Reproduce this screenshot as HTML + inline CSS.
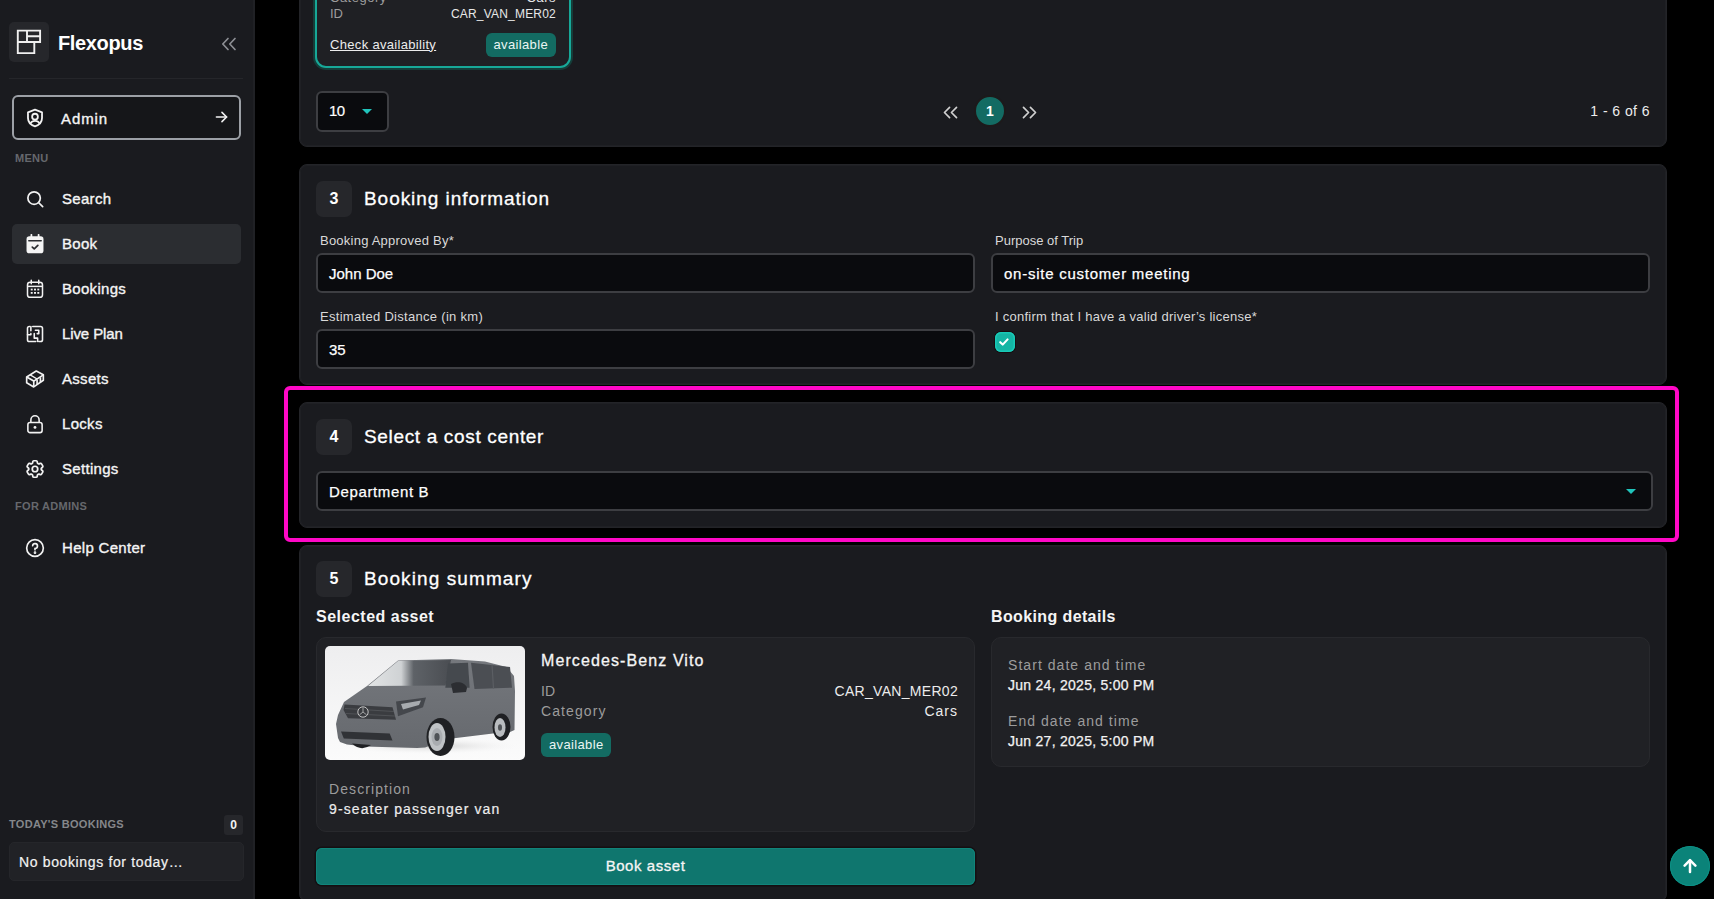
<!DOCTYPE html>
<html><head><meta charset="utf-8">
<style>
*{box-sizing:border-box;margin:0;padding:0}
html,body{width:1714px;height:899px;overflow:hidden;background:#000;font-family:"Liberation Sans",sans-serif;color:#f2f2f2}
.abs{position:absolute}
#sb{position:absolute;left:0;top:0;width:255px;height:899px;background:#1a1b1f;border-right:2px solid #202125}
.logo{left:9px;top:22px;width:40px;height:40px;border-radius:5px;background:#26272b}
.brand{left:58px;top:32px;font-size:20px;font-weight:bold;color:#fff;letter-spacing:-0.35px}
.divider{left:9px;top:78px;width:234px;height:1px;background:#25262a}
.admin{left:12px;top:95px;width:229px;height:45px;border:2px solid #9ca0a6;border-radius:6px;background:#151619}
.cap{font-size:11px;font-weight:bold;color:#66686d;letter-spacing:0.3px}
.nav{left:12px;width:229px;height:40px;border-radius:5px}
.nav.active{background:#2b2d31}
.nav .ic{position:absolute;left:14px;top:11px;width:18px;height:18px}
.nav .tx{position:absolute;left:50px;top:11px;font-size:15px;font-weight:normal;-webkit-text-stroke:0.35px #f5f5f5;color:#f5f5f5;letter-spacing:0.3px}
.card{position:absolute;left:299px;width:1368px;background:#1a1b1f;border:1px solid #232428;box-shadow:inset 0 0 0 1px #1f2024;border-radius:8px}
.step{position:absolute;width:36px;height:36px;border-radius:7px;background:#26272b;font-size:16px;font-weight:bold;text-align:center;line-height:36px;color:#fff}
.title{position:absolute;font-size:19px;color:#fff;-webkit-text-stroke:0.3px #fff}
.lbl{position:absolute;font-size:13px;color:#d9d9d9}
.inp{position:absolute;height:40px;background:#0a0b0e;border:2px solid #3d3e42;border-radius:6px;font-size:15px;padding-left:11px;line-height:38px;color:#fff;-webkit-text-stroke:0.25px #fff}
.teal{background:#137067}
.badge{height:24px;padding:0 8px;border-radius:6px;background:#136b62;font-size:13px;line-height:24px;color:#eaf5f3}
.tri{width:0;height:0;border-left:5px solid transparent;border-right:5px solid transparent;border-top:5px solid #20c4bb}
</style></head>
<body>
<div id="sb">
  <div class="abs logo"><svg class="abs" style="left:0;top:0" width="40" height="40" viewBox="0 0 40 40" fill="none" stroke="#f0f0f0" stroke-width="1.9"><path d="M8.8 8.6H31.1V20H25.3V31.1H8.8Z"/><path d="M8.8 20H25.3M18 8.6V20M18 14.2H31.1"/></svg></div>
  <div class="abs brand">Flexopus</div>
  <svg class="abs" style="left:221px;top:37px" width="16" height="14" viewBox="0 0 16 14" fill="none" stroke="#8d8f94" stroke-width="1.7" stroke-linecap="round" stroke-linejoin="round"><path d="M7 1.5L1.8 7L7 12.5"/><path d="M14 1.5L8.8 7L14 12.5"/></svg>
  <div class="abs divider"></div>
  <div class="abs admin">
    <svg class="abs" style="left:12px;top:11px" width="18" height="20" viewBox="0 0 20 21" fill="none" stroke="#f2f2f2" stroke-width="2" stroke-linejoin="round"><path d="M10 1.2L17.8 4.2V10.5C17.8 15 14.5 18.3 10 19.8C5.5 18.3 2.2 15 2.2 10.5V4.2Z"/><circle cx="10" cy="9" r="3.2"/><path d="M4.8 16.6C6 14.4 8 13.6 10 13.6S14 14.4 15.2 16.6"/></svg>
    <div class="abs" style="left:47px;top:13px;font-size:15px;-webkit-text-stroke:0.35px #f5f5f5;letter-spacing:0.9px;color:#f5f5f5">Admin</div>
    <svg class="abs" style="left:201px;top:14px" width="13" height="12" viewBox="0 0 14 13" fill="none" stroke="#f2f2f2" stroke-width="1.7" stroke-linecap="round" stroke-linejoin="round"><path d="M1.5 6.5H12.5"/><path d="M7.5 1.5L12.5 6.5L7.5 11.5"/></svg>
  </div>
  <div class="abs cap" style="left:15px;top:152px">MENU</div>
  <div class="abs nav" style="top:179px"><svg class="ic" viewBox="0 0 24 24" fill="none" stroke="#f2f2f2" stroke-width="2.3" stroke-linecap="round"><circle cx="10.8" cy="10.8" r="8.3"/><path d="M17 17L22.2 22.2"/></svg><div class="tx">Search</div></div>
  <div class="abs nav active" style="top:224px"><svg class="ic" style="left:14px;top:10px;width:18px;height:20px" viewBox="0 0 24 26" fill="none"><rect x="0.7" y="2.8" width="22.6" height="22.6" rx="3.8" fill="#f5f5f5"/><path d="M3.8 8.6H20.2" stroke="#2b2d31" stroke-width="2.2" stroke-linecap="round"/><path d="M7.2 0.8V4.6M16.8 0.8V4.6" stroke="#f5f5f5" stroke-width="2.4" stroke-linecap="round"/><path d="M8.4 17.2L11 19.6L15.8 14.8" stroke="#2b2d31" stroke-width="2.3" stroke-linecap="round" stroke-linejoin="round"/></svg><div class="tx" style="letter-spacing:0.3px">Book</div></div>
  <div class="abs nav" style="top:269px"><svg class="ic" style="top:10px;height:20px" viewBox="0 0 24 26" fill="none" stroke="#f2f2f2" stroke-width="2"><rect x="2" y="4" width="20" height="20" rx="3.5"/><path d="M2 9.5H22"/><path d="M7 1.2V6M17 1.2V6" stroke-linecap="round"/><g fill="#f2f2f2" stroke="none"><rect x="6.3" y="12.5" width="2.6" height="2.4"/><rect x="10.7" y="12.5" width="2.6" height="2.4"/><rect x="15.1" y="12.5" width="2.6" height="2.4"/><rect x="6.3" y="17" width="2.6" height="2.4"/><rect x="10.7" y="17" width="2.6" height="2.4"/><rect x="15.1" y="17" width="2.6" height="2.4"/></g></svg><div class="tx">Bookings</div></div>
  <div class="abs nav" style="top:314px"><svg class="ic" viewBox="0 0 24 24" fill="none" stroke="#f2f2f2" stroke-width="2.1" stroke-linecap="round" stroke-linejoin="round"><path d="M9 2H19.5Q22 2 22 4.5V19.5Q22 22 19.5 22H17"/><path d="M13 22H4.5Q2 22 2 19.5V4.5Q2 2 4.5 2H5"/><path d="M2 13H6.5V11.5"/><path d="M6.5 7.5V2"/><path d="M12.5 7H17V11.5H15"/><path d="M11 11.5V17.5H15.5V22"/></svg><div class="tx" style="letter-spacing:-0.1px">Live Plan</div></div>
  <div class="abs nav" style="top:359px"><svg class="ic" style="left:13px;top:10px;width:20px;height:20px" viewBox="0 0 24 24" fill="none" stroke="#f2f2f2" stroke-width="2" stroke-linejoin="round"><path d="M2 9.5L13.5 2.5L22 7V13.5L10.5 21.5L2 16.5Z"/><path d="M2 9.5L10.5 14.5L22 7"/><path d="M10.5 14.5V21.5"/><path d="M14.5 12.5V18.5M18.5 10V16" /><path d="M6.2 7L14.5 12" stroke-width="1.6"/></svg><div class="tx">Assets</div></div>
  <div class="abs nav" style="top:404px"><svg class="ic" style="top:10px;height:20px" viewBox="0 0 24 26" fill="none" stroke="#f2f2f2" stroke-width="2.1"><rect x="2.5" y="11" width="19" height="13.5" rx="3"/><path d="M6.5 11V7.5A5.5 5.5 0 0 1 17.5 7.5V11"/><circle cx="12" cy="17.5" r="1.9" fill="#f2f2f2" stroke="none"/></svg><div class="tx">Locks</div></div>
  <div class="abs nav" style="top:449px"><svg class="ic" style="left:12px;top:9px;width:22px;height:22px" viewBox="0 0 24 24" fill="none" stroke="#f2f2f2" stroke-width="1.9" stroke-linejoin="round"><path d="M9.594 3.94c.09-.542.56-.94 1.11-.94h2.593c.55 0 1.02.398 1.11.94l.213 1.281c.063.374.313.686.645.87.074.04.147.083.22.127.325.196.72.257 1.075.124l1.217-.456a1.125 1.125 0 0 1 1.37.49l1.296 2.247a1.125 1.125 0 0 1-.26 1.431l-1.003.827c-.293.241-.438.613-.43.992a7.723 7.723 0 0 1 0 .255c-.008.378.137.75.43.991l1.004.827c.424.35.534.955.26 1.43l-1.298 2.247a1.125 1.125 0 0 1-1.369.491l-1.217-.456c-.355-.133-.75-.072-1.076.124a6.47 6.47 0 0 1-.22.128c-.331.183-.581.495-.644.869l-.213 1.281c-.09.543-.56.94-1.11.94h-2.594c-.55 0-1.019-.398-1.11-.94l-.213-1.281c-.062-.374-.312-.686-.644-.87a6.52 6.52 0 0 1-.22-.127c-.325-.196-.72-.257-1.076-.124l-1.217.456a1.125 1.125 0 0 1-1.369-.49l-1.297-2.247a1.125 1.125 0 0 1 .26-1.431l1.004-.827c.292-.24.437-.613.43-.991a6.932 6.932 0 0 1 0-.255c.007-.38-.138-.751-.43-.992l-1.004-.827a1.125 1.125 0 0 1-.26-1.43l1.297-2.247a1.125 1.125 0 0 1 1.37-.491l1.216.456c.356.133.751.072 1.076-.124.072-.044.146-.086.22-.128.332-.183.582-.495.644-.869l.214-1.28Z"/><circle cx="12" cy="12" r="3"/></svg><div class="tx">Settings</div></div>
  <div class="abs cap" style="left:15px;top:500px">FOR ADMINS</div>
  <div class="abs nav" style="top:528px"><svg class="ic" style="left:13px;top:10px;width:20px;height:20px" viewBox="0 0 24 24" fill="none" stroke="#f2f2f2" stroke-width="2" stroke-linecap="round"><circle cx="12" cy="12" r="10"/><path d="M9.2 9.3A2.9 2.9 0 1 1 12 12.6V14"/><circle cx="12" cy="17.6" r="0.6" fill="#f2f2f2"/></svg><div class="tx">Help Center</div></div>
  <div class="abs cap" style="left:9px;top:818px;color:#85878b">TODAY'S BOOKINGS</div>
  <div class="abs" style="left:224px;top:815px;width:19px;height:20px;border-radius:3px;background:#26272b;font-size:12px;font-weight:bold;text-align:center;line-height:20px">0</div>
  <div class="abs" style="left:9px;top:842px;width:235px;height:39px;border-radius:5px;background:#212226;border:1px solid #25262a;font-size:14px;padding-left:9px;line-height:39px;letter-spacing:0.64px;-webkit-text-stroke:0.2px #f0f0f0">No bookings for today&hellip;</div>
</div>

<!-- card 1 -->
<div class="card" style="top:-40px;height:187px">
  <div class="abs" style="left:15px;top:-100px;width:256px;height:207px;border-radius:11px;border:2px solid #17a898;box-shadow:0 0 0 2px #153d39;background:#1f2024">
    <div class="abs" style="left:13px;top:127px;font-size:13px;color:#9c9c9c;letter-spacing:0.5px">Category</div>
    <div class="abs" style="right:13px;top:127px;font-size:13px;color:#e8e8e8;letter-spacing:0.5px">Cars</div>
    <div class="abs" style="left:13px;top:143px;font-size:13px;color:#9c9c9c">ID</div>
    <div class="abs" style="right:13px;top:144px;font-size:12px;color:#e8e8e8;letter-spacing:0.2px">CAR_VAN_MER02</div>
    <div class="abs" style="left:13px;top:174px;font-size:13px;color:#ececec;text-decoration:underline;text-decoration-thickness:1px;text-underline-offset:1px;letter-spacing:0.32px">Check availability</div>
    <div class="abs badge" style="right:13px;top:170px;padding:0 8px;letter-spacing:0.35px">available</div>
  </div>
  <div class="abs" style="left:16px;top:130px;width:73px;height:41px;background:#0a0b0e;border:2px solid #3d3e42;border-radius:6px">
    <div class="abs" style="left:11px;top:9px;font-size:15px;color:#fff;letter-spacing:-0.6px;-webkit-text-stroke:0.2px #fff">10</div>
    <div class="abs tri" style="left:44px;top:16px"></div>
  </div>
  <svg class="abs" style="left:642px;top:145px" width="17" height="13" viewBox="0 0 17 14" fill="none" stroke="#d0d0d0" stroke-width="1.8" stroke-linecap="round" stroke-linejoin="round"><path d="M7.5 1.5L2 7L7.5 12.5"/><path d="M15 1.5L9.5 7L15 12.5"/></svg>
  <div class="abs" style="left:674px;top:134px;width:32px;height:32px;border-radius:50%;border:2px solid #1d1a1b;background:#136b63"></div>
  <div class="abs" style="left:676px;top:136px;width:28px;height:28px;text-align:center;line-height:28px;font-size:14px;font-weight:bold;color:#fff">1</div>
  <svg class="abs" style="left:721px;top:145px" width="17" height="13" viewBox="0 0 17 14" fill="none" stroke="#d0d0d0" stroke-width="1.8" stroke-linecap="round" stroke-linejoin="round"><path d="M2 1.5L7.5 7L2 12.5"/><path d="M9.5 1.5L15 7L9.5 12.5"/></svg>
  <div class="abs" style="right:16px;top:142px;font-size:14px;color:#ededed;letter-spacing:0.44px">1 - 6 of 6</div>
</div>
<!-- card 2 -->
<div class="card" style="top:164px;height:221px">
  <div class="step" style="left:16px;top:16px">3</div>
  <div class="title" style="left:64px;top:23px;letter-spacing:0.95px">Booking information</div>
  <div class="lbl" style="left:20px;top:68px;letter-spacing:0.23px">Booking Approved By*</div>
  <div class="inp" style="left:16px;top:88px;width:659px">John Doe</div>
  <div class="lbl" style="left:20px;top:144px;letter-spacing:0.3px">Estimated Distance (in km)</div>
  <div class="inp" style="left:16px;top:164px;width:659px">35</div>
  <div class="lbl" style="left:695px;top:68px">Purpose of Trip</div>
  <div class="inp" style="left:691px;top:88px;width:659px;letter-spacing:0.75px">on-site customer meeting</div>
  <div class="lbl" style="left:695px;top:144px;letter-spacing:0.25px">I confirm that I have a valid driver’s license*</div>
  <div class="abs" style="left:695px;top:167px;width:20px;height:20px;border-radius:6px;background:#14b5a4;box-shadow:0 0 0 1px #150d10,inset 0 0 0 1.5px #19c9b6"><svg class="abs" style="left:0;top:0" width="20" height="20" viewBox="0 0 20 20" fill="none" stroke="#fff" stroke-width="2.1" stroke-linecap="round" stroke-linejoin="round"><path d="M5.2 10.2L7.7 12.6L12.6 7.4"/></svg></div>
</div>
<!-- card 3 -->
<div class="card" style="top:402px;height:126px">
  <div class="step" style="left:16px;top:16px">4</div>
  <div class="title" style="left:64px;top:23px;letter-spacing:0.66px">Select a cost center</div>
  <div class="inp" style="left:16px;top:68px;width:1337px;letter-spacing:0.64px">Department B<div class="abs tri" style="left:1308px;top:16px"></div></div>
</div>
<!-- magenta -->
<div class="abs" style="left:284px;top:386px;width:1395px;height:156px;border:4px solid #ff08c6;border-radius:6px"></div>
<!-- card 4 -->
<div class="card" style="top:545px;height:357px">
  <div class="step" style="left:16px;top:15px">5</div>
  <div class="title" style="left:64px;top:22px;letter-spacing:1.1px">Booking summary</div>
  <div class="abs" style="left:16px;top:62px;font-size:16px;font-weight:bold;color:#f5f5f5;letter-spacing:0.5px">Selected asset</div>
  <div class="abs" style="left:16px;top:91px;width:659px;height:195px;background:#202125;border:1px solid #28292d;border-radius:10px">
    <svg class="abs" style="left:8px;top:8px;border-radius:5px" width="200" height="114" viewBox="0 0 200 114">
      <defs>
        <linearGradient id="bg" x1="0" y1="0" x2="0" y2="1"><stop offset="0" stop-color="#eeeeef"/><stop offset="1" stop-color="#fbfbfb"/></linearGradient>
        <linearGradient id="ws" x1="0" y1="0" x2="1" y2="0"><stop offset="0" stop-color="#e2e4e5"/><stop offset="0.4" stop-color="#cfd2d4"/><stop offset="0.55" stop-color="#5e6267"/><stop offset="1" stop-color="#4a4d52"/></linearGradient>
        <linearGradient id="bd" x1="0" y1="0" x2="0" y2="1"><stop offset="0" stop-color="#75787d"/><stop offset="1" stop-color="#66696e"/></linearGradient>
        <radialGradient id="sh" cx="0.5" cy="0.5" r="0.5"><stop offset="0" stop-color="#cfcfcf"/><stop offset="1" stop-color="#f6f6f6" stop-opacity="0"/></radialGradient>
      </defs>
      <rect width="200" height="114" fill="url(#bg)"/>
      <ellipse cx="105" cy="100" rx="90" ry="8" fill="url(#sh)"/>
      <path d="M13 92L11 78L13 69L19 56L42 40L73 14.6L126 13L160 15.5L181.5 21L189 30L190 45L189.5 84L184 86.5L168 87.5L123 93L100 101.5L92 102L40 100.5L22 98.5L15 96Z" fill="url(#bd)"/>
      <path d="M43 40L73 15L126 14L120.5 39.5Z" fill="url(#ws)"/>
      <path d="M123 17.4L143 16.7L144.6 41.7L120.3 41.7Z" fill="#45494e"/>
      <path d="M146 16.7L185 21L187 41.7L149.5 43Z" fill="#4b4e53"/>
      <path d="M167 18.5L168.5 42.5" stroke="#5b5e63" stroke-width="1.2"/>
      <path d="M126 38C132 35 140 36 142 42L141 46L128 47Z" fill="#2c2e32"/>
      <path d="M19.5 58.4L67.5 61.2L71 73.7L23 72.3L18.5 64Z" fill="#3a3c40"/>
      <path d="M20 62.5L69 65.5M21 67.5L70 70" stroke="#55585c" stroke-width="0.8"/>
      <circle cx="38" cy="66" r="5.2" fill="#3a3c40" stroke="#d0d0d0" stroke-width="0.9"/>
      <path d="M38 61.5V66L34.5 68.8M38 66L41.5 68.8" stroke="#d0d0d0" stroke-width="0.7" fill="none"/>
      <path d="M71 55.6L101 51.4L98 61.2L73 70.2Z" fill="#44474c"/>
      <path d="M76 58L96 54.5L94 59L78 63.5Z" fill="#a7abaf"/>
      <path d="M16 85.5L64.7 87.6L67.5 94.6L18.8 92.5Z" fill="#303236"/>
      <ellipse cx="115.5" cy="91" rx="14" ry="19" fill="#1f2023"/>
      <ellipse cx="112" cy="91" rx="8.5" ry="14" fill="#bfc2c5"/>
      <ellipse cx="112" cy="91" rx="5.5" ry="9" fill="#a9acb0"/>
      <ellipse cx="112" cy="91" rx="2.6" ry="4" fill="#4f5256"/>
      <ellipse cx="176.5" cy="81" rx="9" ry="13.5" fill="#1f2023"/>
      <ellipse cx="175" cy="81.5" rx="5.5" ry="9.5" fill="#b9bcbf"/>
      <ellipse cx="175" cy="81.5" rx="2" ry="3.2" fill="#505357"/>
      <path d="M27 97.5Q36 106 46 99Z" fill="#1f2023"/>
    </svg>
    <div class="abs" style="left:224px;top:14px;font-size:16px;color:#f5f5f5;letter-spacing:1.1px;-webkit-text-stroke:0.3px #f5f5f5">Mercedes-Benz Vito</div>
    <div class="abs" style="left:224px;top:45px;font-size:14px;color:#9c9c9c">ID</div>
    <div class="abs" style="right:16px;top:45px;font-size:14px;color:#ececec;letter-spacing:0.3px">CAR_VAN_MER02</div>
    <div class="abs" style="left:224px;top:65px;font-size:14px;color:#9c9c9c;letter-spacing:1.1px">Category</div>
    <div class="abs" style="right:16px;top:65px;font-size:14px;color:#ececec;letter-spacing:1px">Cars</div>
    <div class="abs badge" style="left:224px;top:95px;padding:0 8px;letter-spacing:0.35px">available</div>
    <div class="abs" style="left:12px;top:143px;font-size:14px;color:#9c9c9c;letter-spacing:1.08px">Description</div>
    <div class="abs" style="left:12px;top:163px;font-size:14px;color:#ececec;letter-spacing:1.1px;-webkit-text-stroke:0.2px #ececec">9-seater passenger van</div>
  </div>
  <div class="abs" style="left:16px;top:302px;width:659px;height:37px;border-radius:6px;background:#0f766e;box-shadow:0 0 0 1.5px #140f12,inset 0 0 0 1px #11847a;text-align:center;line-height:36px;font-size:15px;color:#f5f5f5;letter-spacing:0.55px;-webkit-text-stroke:0.3px #f5f5f5">Book asset</div>
  <div class="abs" style="left:691px;top:62px;font-size:16px;font-weight:bold;color:#f5f5f5;letter-spacing:0.38px">Booking details</div>
  <div class="abs" style="left:691px;top:91px;width:659px;height:130px;background:#202125;border:1px solid #28292d;border-radius:10px">
    <div class="abs" style="left:16px;top:19px;font-size:14px;color:#9c9c9c;letter-spacing:1.05px">Start date and time</div>
    <div class="abs" style="left:16px;top:39px;font-size:14px;color:#f2f2f2;letter-spacing:0.27px;-webkit-text-stroke:0.25px #f2f2f2">Jun 24, 2025, 5:00 PM</div>
    <div class="abs" style="left:16px;top:75px;font-size:14px;color:#9c9c9c;letter-spacing:1.05px">End date and time</div>
    <div class="abs" style="left:16px;top:95px;font-size:14px;color:#f2f2f2;letter-spacing:0.27px;-webkit-text-stroke:0.25px #f2f2f2">Jun 27, 2025, 5:00 PM</div>
  </div>
</div>
<div class="abs" style="left:1670px;top:846px;width:40px;height:40px;border-radius:50%;background:#0b8379;box-shadow:inset 0 0 0 1px #0d9085"><svg class="abs" style="left:13px;top:12px" width="14" height="16" viewBox="0 0 14 16" fill="none" stroke="#fff" stroke-width="2.5" stroke-linecap="round" stroke-linejoin="round"><path d="M7 14V2.4"/><path d="M1.6 7.6L7 2.2L12.4 7.6"/></svg></div>
</body></html>
